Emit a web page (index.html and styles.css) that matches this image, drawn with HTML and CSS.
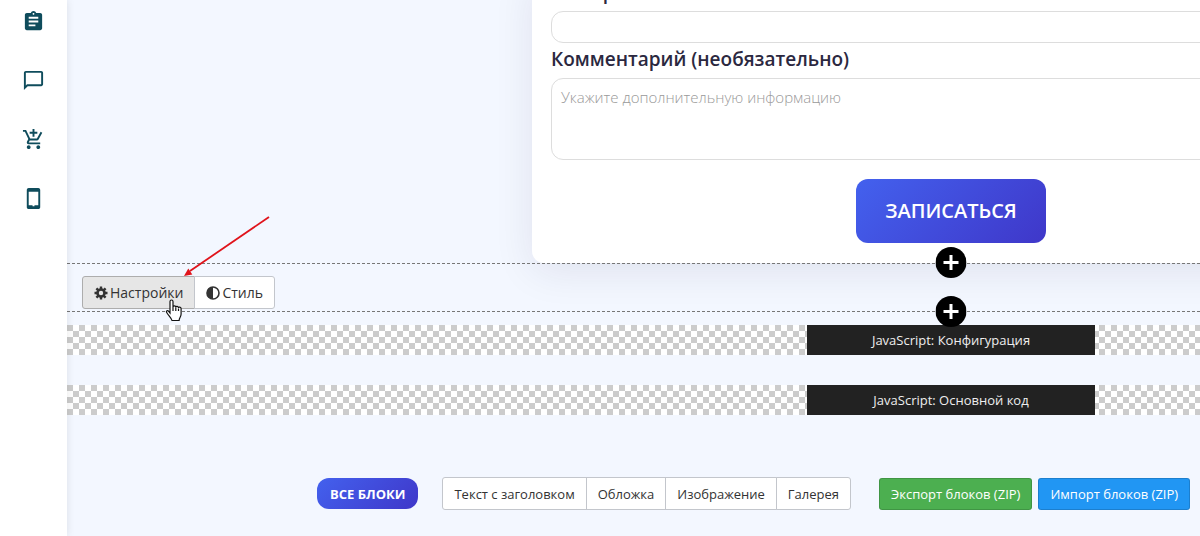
FILE: index.html
```html
<!DOCTYPE html>
<html lang="ru">
<head>
  <meta charset="UTF-8" />
  <meta name="viewport" content="width=device-width, initial-scale=1.0"/>
  <title>Редактор блоков</title>
  <link rel="stylesheet" href="styles.css">
</head>
<body>
  <nav class="sidebar">
    <a href="#" aria-label="Заявки">
      <svg viewBox="0 0 24 24"><path d="M19 3h-4.180C14.400 1.840 13.300 1 12 1s-2.400.84-2.820 2H5c-1.100 0-2 .9-2 2v14c0 1.100.9 2 2 2h14c1.100 0 2-.9 2-2V5c0-1.100-.9-2-2-2zm-7 0c.55 0 1 .45 1 1s-.45 1-1 1-1-.45-1-1 .45-1 1-1zm2 14H7v-2h7v2zm3-4H7v-2h10v2zm0-4H7V7h10v2z"/></svg>
    </a>
    <a href="#" aria-label="Сообщения">
      <svg viewBox="0 0 24 24"><path d="M20 2H4c-1.100 0-2 .9-2 2v18l4-4h14c1.100 0 2-.9 2-2V4c0-1.100-.9-2-2-2zm0 14H5.200L4 17.200V4h16v12z"/></svg>
    </a>
    <a href="#" aria-label="Магазин">
      <svg viewBox="0 0 24 24"><path d="M11 9h2V6h3V4h-3V1h-2v3H8v2h3v3zm-4 9c-1.100 0-1.990.9-1.990 2S5.900 22 7 22s2-.9 2-2-.9-2-2-2zm10 0c-1.100 0-1.990.9-1.990 2s.89 2 1.990 2 2-.9 2-2-.9-2-2-2zm-8.900-5h7.450c.75 0 1.410-.41 1.750-1.030l3.860-7.010L19.420 4l-3.870 7H8.530L4.270 2H1v2h2l3.600 7.590-1.350 2.440C4.520 15.370 5.480 17 7 17h12v-2H7l1.100-2z"/></svg>
    </a>
    <a href="#" aria-label="Приложение">
      <svg viewBox="0 0 24 24"><path d="M17 1H7C5.900 1 5 1.900 5 3v18c0 1.100.9 2 2 2h10c1.100 0 2-.9 2-2V3c0-1.100-.9-2-2-2zm0 18h-4v1h-2v-1H7V5h10v14z"/></svg>
    </a>
  </nav>

  <main class="workspace">
    <div class="canvas">
      <form class="card" onsubmit="return false">
        <label for="number">Номер</label>
        <input type="text" id="number">
        <label for="comment">Комментарий (необязательно)</label>
        <textarea id="comment" placeholder="Укажите дополнительную информацию"></textarea>
        <button type="submit" class="submit">ЗАПИСАТЬСЯ</button>
      </form>

      <section class="block">
        <button class="add add-top" aria-label="Добавить блок выше"></button>
        <div class="group block-tools">
          <button class="active">
            <svg viewBox="0 0 14 14"><circle cx="7" cy="7" r="3.500" fill="none" stroke="currentColor" stroke-width="2.600"/><path d="M7 .5V3M7 11v2.500M.5 7H3M11 7h2.500M2.400 2.400l1.800 1.800M9.800 9.800l1.800 1.800M2.400 11.600l1.800-1.800M9.800 4.200l1.800-1.800" stroke="currentColor" stroke-width="2.400"/></svg>
            Настройки
          </button>
          <button>
            <svg viewBox="0 0 14 14"><circle cx="7" cy="7" r="6" fill="none" stroke="currentColor" stroke-width="1.600"/><path d="M7 1a6 6 0 0 0 0 12z"/></svg>
            Стиль
          </button>
        </div>
        <button class="add add-bottom" aria-label="Добавить блок ниже"></button>
        <!-- arrow and pointer over the settings button -->
        <svg class="arrow" viewBox="0 0 90 64"><path d="M87 3L8 57" fill="none" stroke="#e0131b" stroke-width="1.800"/><path d="M2 62l4.300-7.500 4 5.900z" fill="#e0131b"/></svg>
        <svg class="pointer" viewBox="0 0 18 23"><path d="M5 14V2.500c0-2 3-2 3 0V8c0-1.500 2.800-1.500 2.800.4 0-1.500 2.700-1.300 2.700.5 0-1.300 2.600-1 2.600.8V15c0 3-2 4-2 6.500H7C6.500 19 3.500 16.500 1.700 13.500.7 11.800 2.700 11 3.700 12.300z" fill="#fff" stroke="#111" stroke-width="1.200"/><path d="M8 8v4M10.800 8.500V12M13.500 9.500V12" stroke="#111" stroke-width="1.200"/></svg>
      </section>

      <div class="script"><span>JavaScript: Конфигурация</span></div>
      <div class="script"><span>JavaScript: Основной код</span></div>

      <div class="toolbar">
        <button class="all">ВСЕ БЛОКИ</button>
        <div class="group">
          <button>Текст с заголовком</button>
          <button>Обложка</button>
          <button>Изображение</button>
          <button>Галерея</button>
        </div>
        <div class="transfer">
          <button class="export">Экспорт блоков (ZIP)</button>
          <button class="import">Импорт блоков (ZIP)</button>
        </div>
      </div>
    </div>
  </main>
</body>
</html>
```
FILE: styles.css
```css
* {
  box-sizing: border-box;
}
body {
  margin: 0;
  display: flex;
  min-height: 100vh;
  overflow: hidden;
  background: #f3f7ff;
  color: #333;
  font-family: 'Open Sans', sans-serif;
  font-size: 13px;
}
button {
  font: inherit;
  cursor: pointer;
}
.sidebar {
  flex: 0 0 67px;
  display: flex;
  flex-direction: column;
  align-items: center;
  gap: 36px;
  padding-top: 10px;
  background: #fff;
  box-shadow: 0 0 8px rgba(0,0,0,0.1);
  z-index: 1;
}
.sidebar svg {
  display: block;
  width: 23px;
  height: 23px;
  fill: #0f4c5c;
}
.workspace {
  flex: 1;
  min-width: 0;
  overflow: hidden;
}
/* the canvas keeps desktop width and is clipped by the workspace */
.canvas {
  width: 1768px;
}
.card {
  display: flex;
  flex-direction: column;
  width: 838px;
  margin: -24px auto 0;
  padding: 0 19px 20px;
  background: #fff;
  border-radius: 0 0 12px 12px;
  box-shadow: 0 8px 40px rgba(30,20,70,0.09);
}
.card label {
  padding-bottom: 3px;
  color: #2b2840;
  font-size: 19px;
  font-weight: 600;
  line-height: 32px;
}
.card input,
.card textarea {
  height: 32px;
  padding: 6px 9px;
  border: 1px solid #ddd;
  border-radius: 12px;
  background: #fff;
  font: 300 15px/24px 'Open Sans', sans-serif;
  resize: none;
}
.card textarea {
  height: 82px;
}
.card textarea::placeholder {
  color: #999;
}
.submit {
  align-self: center;
  margin-top: 19px;
  padding: 0 29px;
  border: none;
  border-radius: 12px;
  background: linear-gradient(135deg, #4361ee, #3f37c9);
  color: #fff;
  font-size: 20px;
  font-weight: 600;
  line-height: 64px;
}
.block {
  position: relative;
  padding: 12px 15px 2px;
  border-top: 1px dashed #777;
  border-bottom: 1px dashed #777;
}
.add {
  position: absolute;
  left: 50%;
  width: 31px;
  height: 31px;
  padding: 0;
  border: none;
  border-radius: 50%;
  background:
    linear-gradient(#fff, #fff) center / 15px 3px no-repeat,
    linear-gradient(#fff, #fff) center / 3px 15px no-repeat,
    #000;
  transform: translateX(-50%);
  z-index: 1;
}
.add-top {
  top: -17px;
}
.add-bottom {
  bottom: -16px;
}
.group {
  display: flex;
}
.group button {
  height: 33px;
  margin-left: -1px;
  padding: 0 11px;
  border: 1px solid #c3c6cc;
  background: #fff;
  color: #333;
}
.group button:first-child {
  margin-left: 0;
  border-radius: 3px 0 0 3px;
}
.group button:last-child {
  border-radius: 0 3px 3px 0;
}
.group .active {
  background: #e6e6e6;
  border-color: #adadad;
}
.block-tools button {
  display: flex;
  align-items: center;
  gap: 2px;
  font-size: 14px;
}
.block-tools svg {
  width: 14px;
  height: 14px;
  fill: currentColor;
}
.arrow {
  position: absolute;
  left: 115px;
  top: -50px;
  width: 90px;
  height: 64px;
}
.pointer {
  position: absolute;
  left: 98px;
  top: 35px;
  width: 18px;
  height: 23px;
  z-index: 1;
}
.script {
  display: flex;
  justify-content: center;
  margin-bottom: 30px;
  background: repeating-conic-gradient(#ccc 0 25%, #fff 0 50%) 6px 0 / 12px 12px;
}
.block + .script {
  margin-top: 13px;
}
.script span {
  width: 288px;
  background: #222;
  color: #eee;
  line-height: 30px;
  text-align: center;
}
.toolbar {
  display: flex;
  align-items: center;
  margin-top: 62px;
  padding-left: 250px;
}
.all {
  height: 31px;
  margin-right: 24px;
  padding: 0 13px;
  border: none;
  border-radius: 12px;
  background: linear-gradient(135deg, #4361ee, #3f37c9);
  color: #fff;
  font-weight: 700;
}
.transfer {
  display: flex;
  gap: 6px;
  margin-left: 28px;
}
.transfer button {
  height: 32px;
  padding: 0 11px;
  border: 1px solid rgba(0,0,0,0.15);
  border-radius: 3px;
  color: #fff;
}
.export {
  background: #4caf50;
}
.import {
  background: #2196f3;
}
```
